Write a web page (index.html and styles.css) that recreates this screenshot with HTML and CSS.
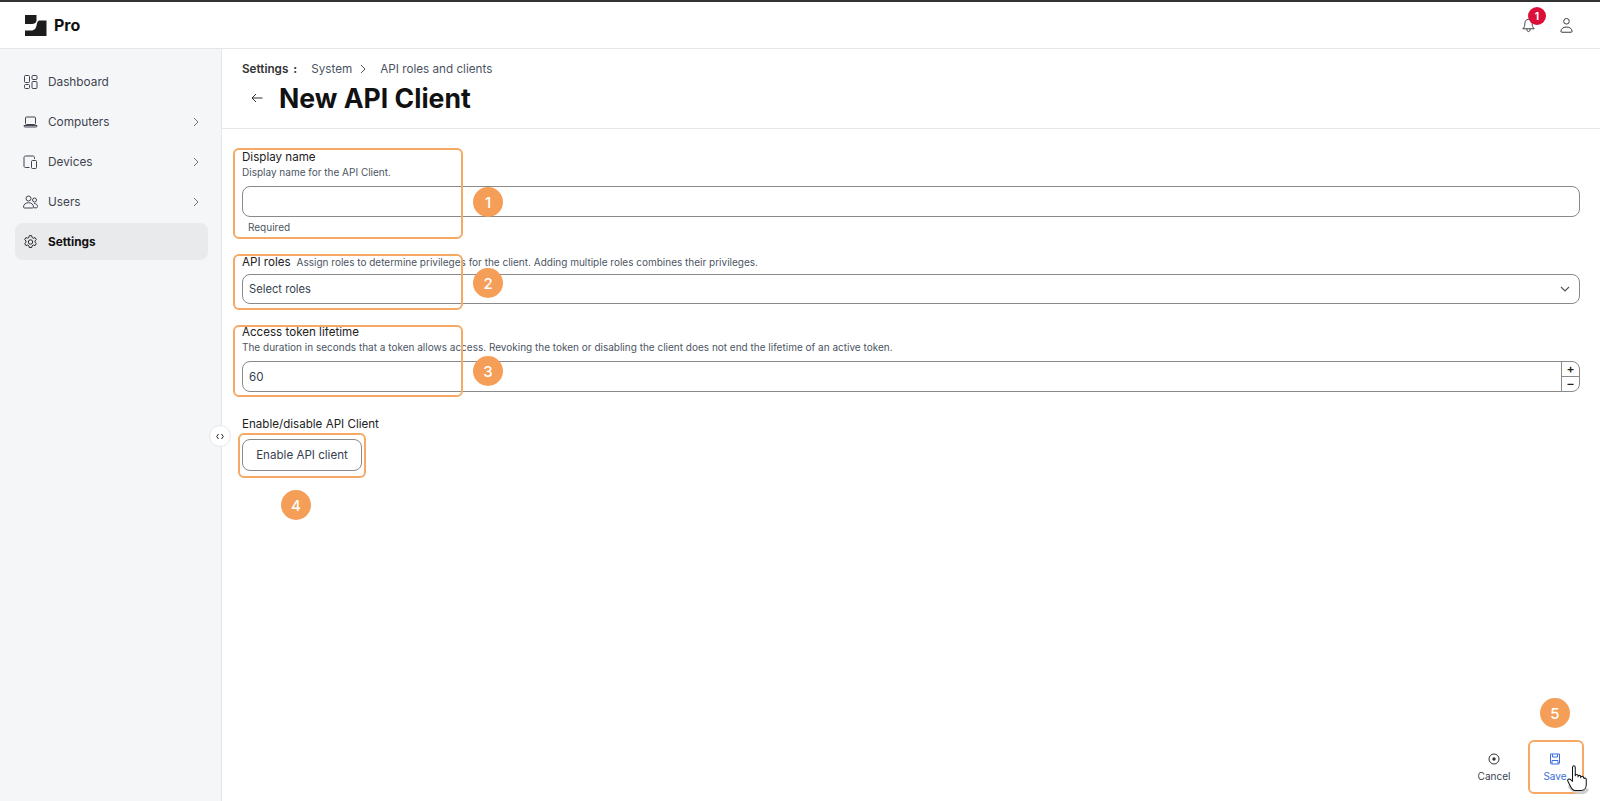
FILE: index.html
```html
<!DOCTYPE html>
<html lang="en">
<head>
<meta charset="utf-8">
<title>New API Client</title>
<link rel="stylesheet" href="styles.css">
</head>
<body>
<div class="app">
  <header class="topbar">
    <div class="brand">
      <svg class="logo" width="22" height="21" viewBox="0 0 22 21"><path fill="#1c1c1c" d="M0 0h11.500v5.500C11.500 8 9 9 6.500 9H0zM14 5.500h7.500V21H0v-5.500h6C10 15.500 11 13 11.500 10.500 12 8 12.500 6 14 5.500z"/></svg>
      <span class="brand-name">Pro</span>
    </div>
    <div class="top-actions">
      <span class="bell">
        <svg width="13" height="15" viewBox="0 0 16 18" fill="none" stroke="#2b2b2b" stroke-width="1.100"><path d="M8 1.500c-3 0-4.500 2.200-4.500 5 0 3.500-1 5-2.500 6.500h14c-1.500-1.500-2.500-3-2.500-6.500 0-2.800-1.500-5-4.500-5z"/><path d="M6 13.500c0 2 .8 3 2 3s2-1 2-3"/></svg>
        <span class="badge">1</span>
      </span>
      <svg width="13" height="16" viewBox="0 0 14 17" fill="none" stroke="#2b2b2b" stroke-width="1"><circle cx="7" cy="4.500" r="3"/><path d="M1 15.500c0-3 2.500-4.800 6-4.800s6 1.800 6 4.800c0 .5-.5.8-1 .8H2c-.5 0-1-.3-1-.8z"/></svg>
    </div>
  </header>
  <div class="body">
    <aside class="sidebar">
      <nav class="nav">
        <a class="nav-item">
          <svg class="nav-icon" width="14" height="14" viewBox="0 0 14 14" fill="none" stroke="#3f4450" stroke-width="1"><rect x="1" y=".5" width="5" height="7" rx="1"/><rect x="8.500" y=".5" width="5" height="4" rx="1"/><rect x="1" y="9.500" width="5" height="4" rx="1"/><rect x="8.500" y="6.500" width="5" height="7" rx="1"/></svg>
          <span class="nav-label">Dashboard</span>
        </a>
        <a class="nav-item">
          <svg class="nav-icon" width="14" height="12" viewBox="0 0 14 12" fill="none" stroke="#3f4450" stroke-width="1"><rect x="2" y="1" width="10" height="7.500" rx="1"/><path d="M.5 9.500h13v.5c0 .7-.5 1-1 1h-11c-.5 0-1-.3-1-1z"/></svg>
          <span class="nav-label">Computers</span>
          <svg class="chev" width="6" height="10" viewBox="0 0 6 10" fill="none" stroke="#6b7280" stroke-width="1"><path d="M1 1l4 4-4 4"/></svg>
        </a>
        <a class="nav-item">
          <svg class="nav-icon" width="14" height="14" viewBox="0 0 14 14" fill="none" stroke="#3f4450" stroke-width="1"><path d="M6 12.500H2c-.8 0-1.500-.6-1.500-1.500V2.500C.5 1.600 1.200 1 2 1h7.500c.8 0 1.500.6 1.500 1.500V4"/><rect x="8" y="5.500" width="5" height="8" rx="1"/></svg>
          <span class="nav-label">Devices</span>
          <svg class="chev" width="6" height="10" viewBox="0 0 6 10" fill="none" stroke="#6b7280" stroke-width="1"><path d="M1 1l4 4-4 4"/></svg>
        </a>
        <a class="nav-item">
          <svg class="nav-icon" width="15" height="14" viewBox="0 0 15 14" fill="none" stroke="#3f4450" stroke-width="1"><circle cx="5.500" cy="3.500" r="2.500"/><circle cx="11.500" cy="5" r="2"/><path d="M.5 12c0-2.500 2-4.300 5-4.300s5 1.800 5 4.300c0 .6-.4 1-1 1h-8c-.6 0-1-.4-1-1z"/><path d="M11 8.500c2 0 3.500 1 3.500 3 0 .8-.5 1.300-1 1.300H11"/></svg>
          <span class="nav-label">Users</span>
          <svg class="chev" width="6" height="10" viewBox="0 0 6 10" fill="none" stroke="#6b7280" stroke-width="1"><path d="M1 1l4 4-4 4"/></svg>
        </a>
        <a class="nav-item active">
          <svg class="nav-icon" width="14" height="14" viewBox="0 0 14 14" fill="none" stroke="#2b2b2b" stroke-width="1"><circle cx="7" cy="7" r="2.200"/><path d="M5.800.7h2.400l.4 1.800 1.300.7 1.700-.6 1.200 2-1.300 1.300v1.400l1.300 1.200-1.200 2.100-1.700-.6-1.300.8-.4 1.700H5.800l-.4-1.700-1.300-.8-1.700.6-1.200-2.100 1.300-1.200V5.900L1.200 4.600l1.200-2 1.700.6 1.300-.7z" stroke-linejoin="round"/></svg>
          <span class="nav-label">Settings</span>
        </a>
      </nav>
      <button class="collapse" type="button">
        <svg width="8" height="7" viewBox="0 0 8 7" fill="none" stroke="#222" stroke-width="1"><path d="M2.500 1L.7 3.500l1.800 2.500M5.500 1l1.800 2.500L5.500 6"/></svg>
      </button>
    </aside>
    <main class="main">
      <div class="page-head">
        <div class="crumbs">
          <span class="crumb-root">Settings</span><span class="crumb-colon">:</span>
          <span class="crumb">System</span>
          <svg class="crumb-sep" width="6" height="10" viewBox="0 0 6 10" fill="none" stroke="#555" stroke-width="1"><path d="M1 1l4 4-4 4"/></svg>
          <span class="crumb">API roles and clients</span>
        </div>
        <div class="title-row">
          <svg width="12" height="10" viewBox="0 0 12 10" fill="none" stroke="#333" stroke-width="1"><path d="M11.500 5H1M5 1L1 5l4 4"/></svg>
          <h1 class="title">New API Client</h1>
        </div>
      </div>
      <form class="form">
        <div class="field f-name">
          <label class="label">Display name</label>
          <p class="hint">Display name for the API Client.</p>
          <div class="input"></div>
          <p class="error">Required</p>
        </div>
        <div class="field f-roles">
          <div class="label-row"><label class="label">API roles</label><span class="hint">Assign roles to determine privileges for the client. Adding multiple roles combines their privileges.</span></div>
          <div class="input select">
            <span>Select roles</span>
            <svg width="10" height="6" viewBox="0 0 10 6" fill="none" stroke="#555" stroke-width="1.200"><path d="M1 1l4 4 4-4"/></svg>
          </div>
        </div>
        <div class="field f-life">
          <label class="label">Access token lifetime</label>
          <p class="hint">The duration in seconds that a token allows access. Revoking the token or disabling the client does not end the lifetime of an active token.</p>
          <div class="input number">
            <span class="number-value">60</span>
            <span class="stepper"><span class="step">+</span><span class="step">–</span></span>
          </div>
        </div>
        <div class="field f-enable">
          <label class="label">Enable/disable API Client</label>
          <button class="btn" type="button">Enable API client</button>
        </div>
      </form>
      <div class="actions">
        <div class="action">
          <svg width="12" height="12" viewBox="0 0 12 12" fill="none" stroke="#333" stroke-width="1"><circle cx="6" cy="6" r="5"/><circle cx="6" cy="6" r="1.700" fill="#333" stroke="none"/></svg>
          <span>Cancel</span>
        </div>
        <div class="action primary">
          <svg width="12" height="12" viewBox="0 0 12 12" fill="none" stroke="#3b6fe0" stroke-width="1"><path d="M1.500 1h9v9c0 .6-.4 1-1 1h-7c-.6 0-1-.4-1-1z"/><path d="M3.500 1v3h5V1M3 11V7.500h6V11"/></svg>
          <span>Save</span>
        </div>
      </div>
    </main>
  </div>
  <div class="note box-1"></div><div class="num num-1">1</div>
  <div class="note box-2"></div><div class="num num-2">2</div>
  <div class="note box-3"></div><div class="num num-3">3</div>
  <div class="note box-4"></div><div class="num num-4">4</div>
  <div class="note box-5"></div><div class="num num-5">5</div>
  <svg class="hand" width="22" height="33" viewBox="0 0 24 32"><path fill="#cfcfcf" d="M1 24c3 5 8 8 14 8 5 0 8-2 9-6l-22-4z"/><path fill="#fff" stroke="#111" stroke-width="1.100" stroke-linejoin="round" d="M6 3c0-2.500 3-2.500 3 0v9c0-2 3-2 3 0v1c0-2 3-2 3 0v1c0-2 3-2 3 0l1 1c0-1 2-1 2 1v6c0 3-2 6-6 6H9c-3 0-4-2-5-4L1 18c-1-2 1-3.500 3-2l2 2z"/></svg>
</div>
</body>
</html>
```

FILE: styles.css
```css
* { box-sizing: border-box; }
html, body { margin: 0; height: 100%; }
body {
  font-family: Inter, "Liberation Sans", sans-serif;
  color: #1f2937;
  background: #fff;
  overflow: hidden;
}
p, h1 { margin: 0; }
.app {
  position: relative;
  height: 801px;
  display: flex;
  flex-direction: column;
  border-top: 2px solid #333;
}
.topbar {
  height: 47px;
  flex: none;
  display: flex;
  align-items: center;
  justify-content: space-between;
  padding: 0 27px 0 25px;
  border-bottom: 1px solid #e5e7eb;
}
.brand { display: flex; align-items: center; gap: 7px; }
.brand-name { font-size: 16px; font-weight: 700; color: #111; }
.top-actions { display: flex; align-items: center; gap: 25px; }
.bell { position: relative; display: flex; }
.badge {
  position: absolute;
  top: -11px;
  left: 6px;
  width: 18px;
  height: 18px;
  border-radius: 50%;
  background: #dc0f3a;
  color: #fff;
  font-size: 10px;
  font-weight: 700;
  display: flex;
  align-items: center;
  justify-content: center;
}
.body { flex: 1; display: flex; min-height: 0; }
.sidebar {
  position: relative;
  width: 222px;
  flex: none;
  background: #f5f6f8;
  border-right: 1px solid #e5e7eb;
  padding: 14px 13px 0 15px;
}
.nav { display: flex; flex-direction: column; gap: 3px; }
.nav-item {
  height: 37px;
  display: flex;
  align-items: center;
  padding: 0 9px 0 8px;
  border-radius: 8px;
  font-size: 11.8px;
  color: #3f4450;
}
.nav-icon { width: 15px; flex: none; }
.nav-label { margin-left: 10px; flex: 1; }
.nav-item.active { background: #e9eaec; color: #111; font-weight: 700; }
.chev { flex: none; }
.collapse {
  position: absolute;
  top: 376px;
  right: -10px;
  width: 22px;
  height: 22px;
  padding: 0;
  border-radius: 50%;
  border: 1px solid #e5e7eb;
  background: #fff;
  display: flex;
  align-items: center;
  justify-content: center;
}
.main { flex: 1; display: flex; flex-direction: column; min-width: 0; }
.page-head {
  height: 80px;
  flex: none;
  padding: 12px 20px 0;
  border-bottom: 1px solid #e5e7eb;
}
.crumbs { display: flex; align-items: center; font-size: 11.7px; line-height: 16px; color: #4b5563; }
.crumb-root { font-weight: 600; color: #333; }
.crumb-colon { font-weight: 700; color: #333; margin: 0 14px 0 5px; }
.crumb-sep { margin: 0 14px 0 8px; }
.title-row { display: flex; align-items: center; gap: 16px; padding: 4px 0 0 9px; }
.title { font-size: 26.6px; line-height: 34px; font-weight: 700; color: #111; }
.form { padding: 0 20px; }
.field { display: flex; flex-direction: column; }
.f-name { padding-top: 20px; }
.f-roles { padding-top: 20px; }
.f-life { padding-top: 20px; }
.f-enable { padding-top: 24px; }
.label { font-size: 11.6px; line-height: 16px; color: #222; }
.hint { font-size: 10px; line-height: 14px; color: #4b5563; }
.label-row { display: flex; align-items: baseline; gap: 6px; }
.input {
  height: 31px;
  margin-top: 7px;
  border: 1px solid #8a8a8a;
  border-radius: 8px;
  background: #fff;
  font-size: 11.2px;
  color: #374151;
}
.f-roles .input { height: 30px; margin-top: 4px; }
.select {
  display: flex;
  align-items: center;
  justify-content: space-between;
  padding: 0 9px 0 6px;
}
.number { display: flex; align-items: center; justify-content: space-between; padding-left: 6px; overflow: hidden; }
.number-value { font-size: 11.6px; }
.stepper { width: 18px; height: 100%; display: flex; flex-direction: column; border-left: 1px solid #8a8a8a; }
.step {
  flex: 1;
  min-height: 0;
  display: flex;
  align-items: center;
  justify-content: center;
  font-size: 12px;
  font-weight: 600;
  line-height: 12px;
  color: #222;
}
.step + .step { border-top: 1px solid #8a8a8a; }
.error { margin-top: 3px; padding-left: 6px; font-size: 10px; line-height: 14px; color: #4b5563; }
.btn {
  align-self: flex-start;
  width: 120px;
  height: 32px;
  margin-top: 7px;
  padding: 0;
  border: 1px solid #8a8a8a;
  border-radius: 8px;
  background: #fff;
  font-family: inherit;
  font-size: 11.6px;
  color: #374151;
}
.actions {
  margin-top: auto;
  display: flex;
  justify-content: flex-end;
  padding: 0 17px 7px 0;
}
.action {
  width: 56px;
  height: 53px;
  margin-left: 5px;
  display: flex;
  flex-direction: column;
  align-items: center;
  justify-content: center;
  gap: 5px;
  font-size: 10px;
  color: #374151;
}
.primary { color: #3b6fe0; }
.note {
  position: absolute;
  border: 2px solid #f6a865;
  border-radius: 6px;
  pointer-events: none;
}
.box-1 { left: 233px; top: 146px; width: 230px; height: 91px; }
.box-2 { left: 233px; top: 252px; width: 230px; height: 56px; }
.box-3 { left: 233px; top: 323px; width: 230px; height: 72px; }
.box-4 { left: 238px; top: 431px; width: 128px; height: 45px; }
.box-5 { left: 1528px; top: 738px; width: 56px; height: 54px; }
.num {
  position: absolute;
  width: 30px;
  height: 30px;
  border-radius: 50%;
  background: #f59e57;
  color: #fff;
  font-size: 15px;
  font-weight: 500;
  display: flex;
  align-items: center;
  justify-content: center;
}
.num-1 { left: 473px; top: 185px; }
.num-2 { left: 473px; top: 266px; }
.num-3 { left: 473px; top: 354px; }
.num-4 { left: 281px; top: 488px; }
.num-5 { left: 1540px; top: 696px; }
.hand { position: absolute; left: 1567px; top: 761px; }
```
